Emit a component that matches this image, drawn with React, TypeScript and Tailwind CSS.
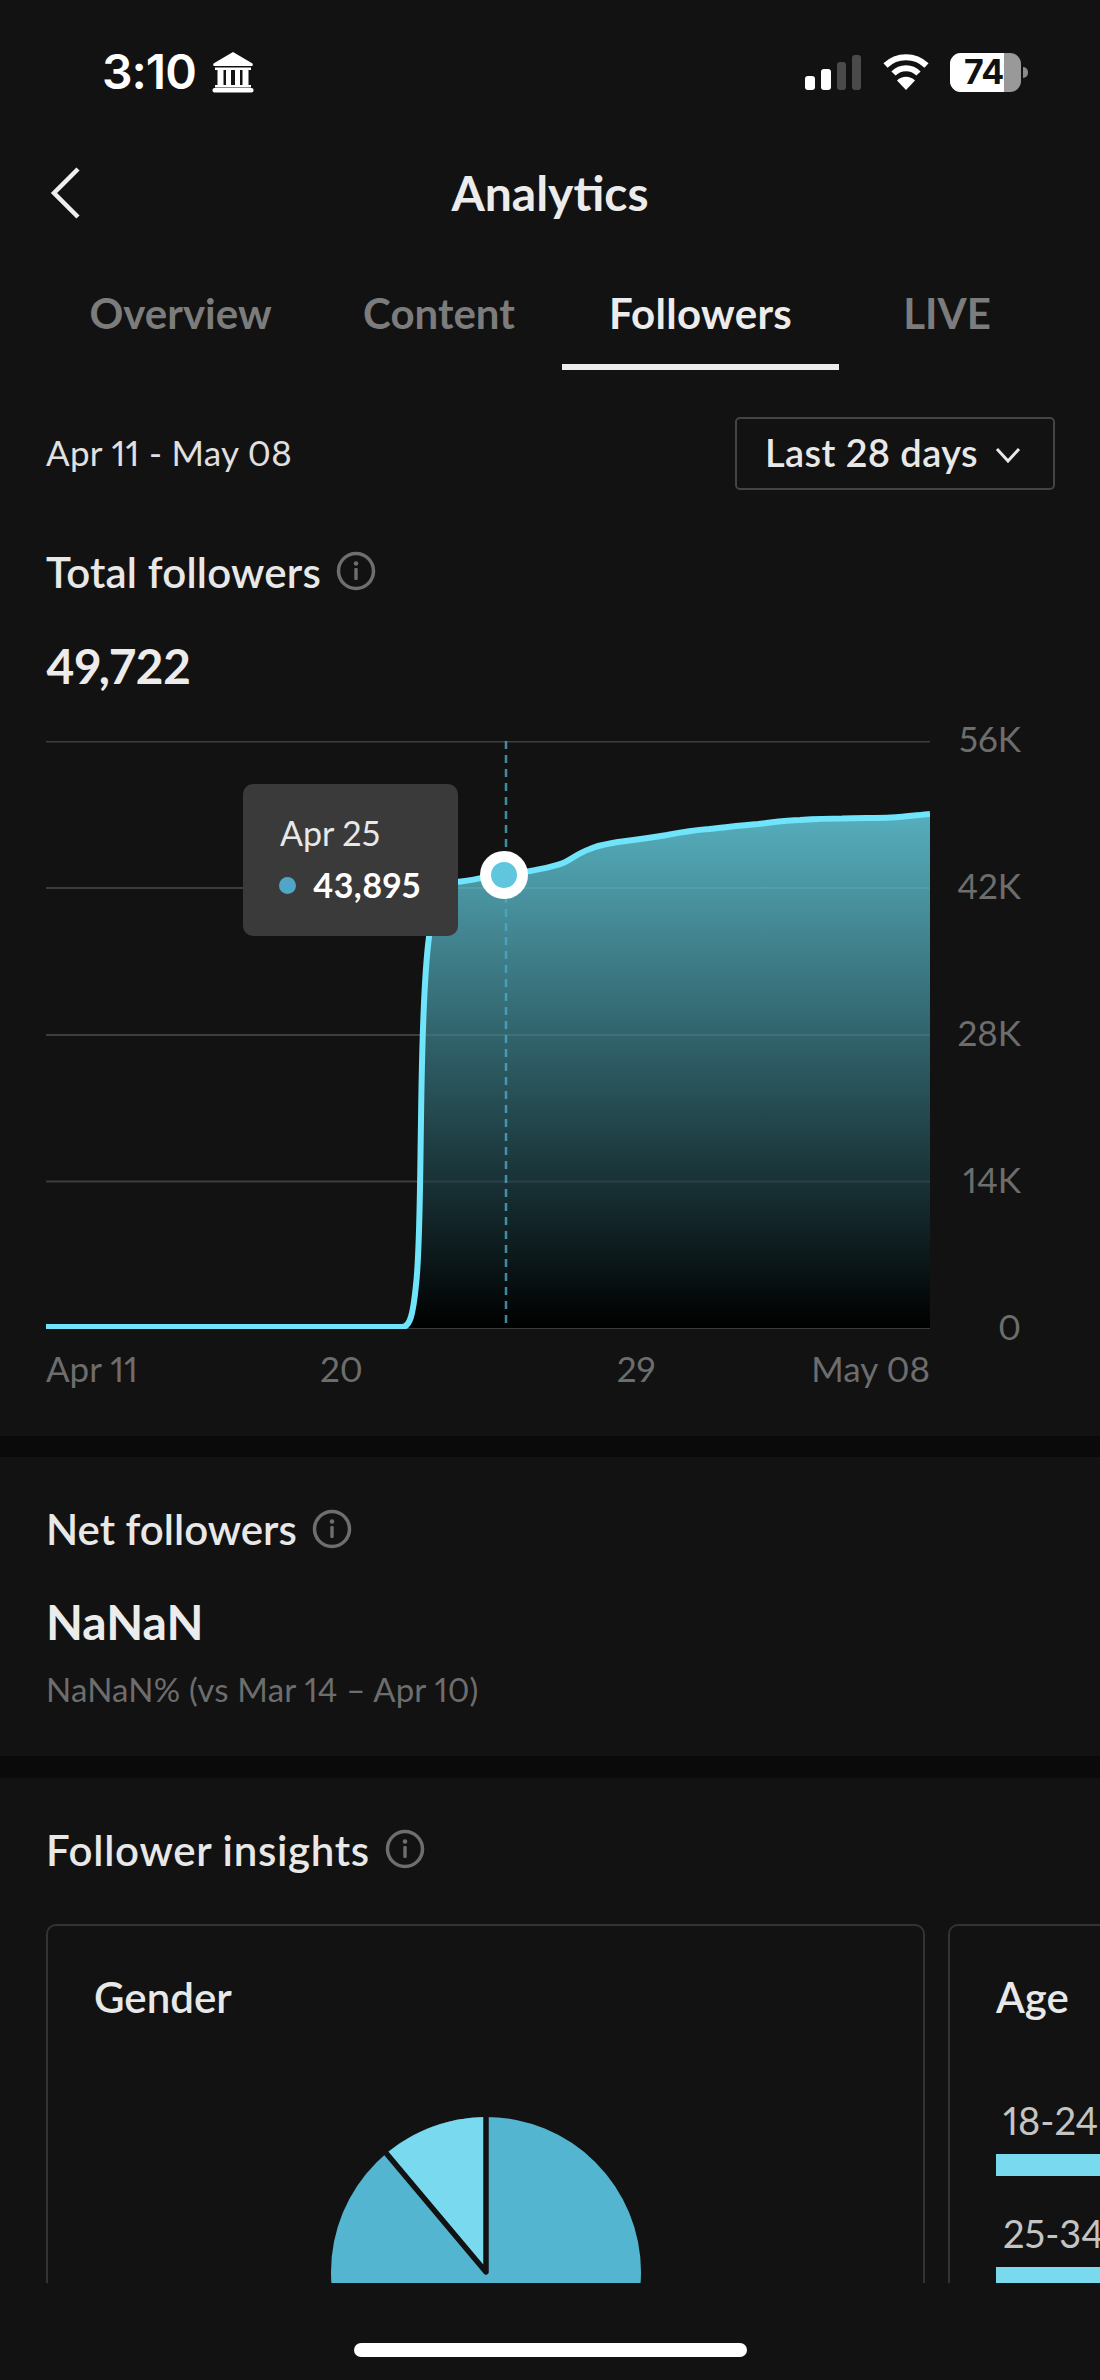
import React from "react";

function InfoIcon({ className }: { className?: string }) {
  return (
    <svg viewBox="0 0 40 40" className={className} fill="none">
      <circle cx="20" cy="20" r="17.5" stroke="#6e6e6e" strokeWidth="3.5" />
      <circle cx="20" cy="12.5" r="2.3" fill="#6e6e6e" />
      <rect x="18.3" y="17" width="3.4" height="12" rx="1" fill="#6e6e6e" />
    </svg>
  );
}

function BankIcon() {
  return (
    <svg width="42" height="42" viewBox="0 0 42 42" fill="white" className="ml-[16px]">
      <path d="M21 1 L40.5 12.5 Q41.5 14.5 40 15 L2 15 Q0.5 14.5 1.5 12.5 Z" />
      <rect x="3" y="16.5" width="36" height="2.5" />
      <rect x="5.5" y="19" width="6" height="15.5" />
      <rect x="14" y="19" width="5" height="15.5" />
      <rect x="23" y="19" width="5" height="15.5" />
      <rect x="30.5" y="19" width="6" height="15.5" />
      <rect x="3" y="34" width="36" height="2.5" />
      <rect x="0.5" y="37" width="41" height="4.5" rx="2" />
    </svg>
  );
}

function Signal() {
  return (
    <div className="flex items-end gap-[6px] h-[35px]">
      <div className="w-[10px] h-[14px] rounded-[3px] bg-white" />
      <div className="w-[10px] h-[21px] rounded-[3px] bg-white" />
      <div className="w-[9px] h-[28px] rounded-[3px] bg-[#4a4a4a]" />
      <div className="w-[9px] h-[35px] rounded-[3px] bg-[#4a4a4a]" />
    </div>
  );
}

function Wifi() {
  return (
    <svg width="46" height="36" viewBox="0 0 46 36" fill="none" className="ml-[22px]">
      <path d="M2.5 11.5 C14 0.5 32 0.5 43.5 11.5" stroke="white" strokeWidth="6" strokeLinecap="butt" />
      <path d="M10.5 19.5 C17.5 12.5 28.5 12.5 35.5 19.5" stroke="white" strokeWidth="6" />
      <path d="M23 36 L14 26.5 C19 21.5 27 21.5 32 26.5 Z" fill="white" />
    </svg>
  );
}

function Battery() {
  return (
    <div className="flex items-center ml-[21px]">
      <div className="relative w-[71px] h-[39px] rounded-[11px] bg-[#999999] overflow-hidden">
        <div className="h-full w-[54px] bg-white" />
        <div className="absolute inset-0 pl-[14px] flex items-center text-[34px] font-bold text-[#111] leading-none tracking-[-0.5px]" style={{ fontFamily: "Inter, sans-serif" }}>
          74
        </div>
      </div>
      <div className="ml-[2px] w-[5px] h-[11px] rounded-r-full bg-[#8a8a8a]" />
    </div>
  );
}

function Chart() {
  const line =
    "M46 1327 L402 1327 C410 1327 413 1315 416 1285 C420 1250 420 1180 421 1120 C422 1040 424 975 429 937 C432 905 440 885 456 882 C468 881 476 879 486 877 C500 875 515 873 530 871 C545 868 553 867 563 863 C572 859 578 853 590 849 C598 845 608 844 618 842 C635 840 650 838 667 835 C682 832 695 830 709 829 C728 827 743 825 758 824 C775 822 788 820 800 820 C815 819 830 818.5 842 818.5 C860 818 880 818 891 817.5 C905 817 918 815 930 814";
  return (
    <div className="relative w-[884px] h-[588px]">
      <svg viewBox="46 741 884 588" className="block w-full h-full" width="884" height="588">
        <defs>
          <linearGradient id="fill" x1="0" y1="815" x2="0" y2="1328" gradientUnits="userSpaceOnUse">
            <stop offset="0" stopColor="#56aebd" />
            <stop offset="1" stopColor="#000000" />
          </linearGradient>
        </defs>
        {[741.5, 888, 1035, 1181.5, 1328].map((y) => (
          <line key={y} x1="46" x2="930" y1={y} y2={y} stroke="#3d3d3d" strokeWidth="2" />
        ))}
        <path d={line + " L930 1328 L405 1328 Z"} fill="url(#fill)" />
        {[888, 1035, 1181.5].map((y) => (
          <line key={y} x1="421" x2="930" y1={y} y2={y} stroke="#ffffff" strokeOpacity="0.08" strokeWidth="2" />
        ))}
        <line x1="506" x2="506" y1="741" y2="1328" stroke="#4fa8c8" strokeOpacity="0.8" strokeWidth="2.5" strokeDasharray="8 6" />
        <path d={line} fill="none" stroke="#6fe4fa" strokeWidth="6" />
        <circle cx="504" cy="875" r="24" fill="#ffffff" />
        <circle cx="504" cy="875" r="13" fill="#5fc6de" />
      </svg>
      <div className="absolute left-[197px] top-[43px] w-[215px] h-[152px] rounded-[10px] bg-[#3a3a3a] pl-[37px] pt-[29px]">
        <div className="text-[34px] leading-[40px] text-[#e8e8e8]">Apr 25</div>
        <div className="mt-[12px] flex items-center">
          <span className="w-[17px] h-[17px] rounded-full bg-[#4fa6c9] -ml-[1px]" />
          <span className="ml-[17px] text-[34px] leading-[40px] font-bold text-white tracking-[0.4px]">43,895</span>
        </div>
      </div>
    </div>
  );
}

export default function App() {
  return (
    <div className="w-[1100px] h-[2380px] bg-[#121212] flex flex-col overflow-hidden text-[#e8e8e8] proportional-nums" style={{ fontFamily: "Lato, sans-serif" }}>
      <div className="flex-1 min-h-0 overflow-hidden">
        <div className="h-[144px] flex items-center pl-[102px] pr-[72px]">
          <span className="text-[48px] leading-none font-semibold text-white tracking-[-1px]" style={{ fontFamily: "Inter, sans-serif" }}>3:10</span>
          <BankIcon />
          <div className="ml-auto flex items-center">
            <Signal />
            <Wifi />
            <Battery />
          </div>
        </div>

        <div className="relative h-[98px] flex items-center justify-center">
          <svg width="32" height="54" viewBox="0 0 32 54" fill="none" className="absolute left-[49px] top-[22px]">
            <path d="M29 3 L5 27 L29 51" stroke="#efefef" strokeWidth="4.5" />
          </svg>
          <h1 className="text-[48px] leading-[56px] font-bold text-[#ececec]">Analytics</h1>
        </div>

        <div className="h-[128px] flex pl-[45px]">
          <div className="w-[271px] pt-[50px] text-center text-[42px] leading-[42px] font-bold text-[#7c7c7c]">Overview</div>
          <div className="w-[246px] pt-[50px] text-center text-[42px] leading-[42px] font-bold text-[#7c7c7c]">Content</div>
          <div className="w-[277px] pt-[50px] text-center text-[42px] leading-[42px] font-bold text-[#ececec] border-b-[6px] border-[#ececec] tracking-[0.3px]">Followers</div>
          <div className="w-[216px] pt-[50px] text-center text-[42px] leading-[42px] font-bold text-[#7c7c7c]">LIVE</div>
        </div>

        <div className="mt-[47px] pl-[46px] pr-[45px] flex items-center justify-between">
          <span className="text-[35px] leading-[44px] text-[#e0e0e0] -mt-[4px] tracking-[0.3px]">Apr 11 - May 08</span>
          <div className="w-[320px] h-[73px] border-[2.5px] border-[#444444] rounded-[5px] flex items-center pl-[28px]">
            <span className="text-[38px] leading-[44px] font-semibold text-[#e8e8e8] -mt-[3px] tracking-[0.4px]">Last 28 days</span>
            <svg width="26" height="16" viewBox="0 0 26 16" fill="none" className="ml-[17px] mt-[2px]">
              <path d="M2 2 L13 14 L24 2" stroke="#e8e8e8" strokeWidth="3" />
            </svg>
          </div>
        </div>

        <div className="mt-[58px] px-[46px] flex items-center">
          <span className="text-[42px] leading-[48px] font-semibold tracking-[0.2px]">Total followers</span>
          <InfoIcon className="ml-[15px] w-[40px] h-[40px] -mt-[2px]" />
        </div>
        <div className="mt-[42px] px-[46px] text-[48px] leading-[56px] font-bold text-[#ececec]">49,722</div>

        <div className="mt-[47px] pl-[46px] flex">
          <Chart />
          <div className="w-[91px] -mt-[23px] -mb-[17px] flex flex-col justify-between items-end text-[35px] leading-[40px] text-[#6d6d6d]">
            <span>56K</span>
            <span>42K</span>
            <span>28K</span>
            <span>14K</span>
            <span>0</span>
          </div>
        </div>
        <div className="mt-[19px] mb-[48px] pl-[46px] w-[930px] flex text-[35px] leading-[40px] text-[#6d6d6d]">
          <span>Apr 11</span>
          <span className="ml-[182px]">20</span>
          <span className="ml-[254px]">29</span>
          <span className="ml-auto">May 08</span>
        </div>

        <div className="h-[21px] bg-[#0a0a0a]" />

        <div className="h-[299px] px-[46px] pt-[48px]">
          <div className="flex items-center">
            <span className="text-[42px] leading-[48px] font-semibold">Net followers</span>
            <InfoIcon className="ml-[15px] w-[40px] h-[40px]" />
          </div>
          <div className="mt-[41px] text-[48px] leading-[56px] font-bold text-[#ececec]">NaNaN</div>
          <div className="mt-[19px] text-[33px] leading-[40px] text-[#6d6d6d] tracking-[0.2px]">NaNaN% (vs Mar 14 – Apr 10)</div>
        </div>

        <div className="h-[22px] bg-[#0a0a0a]" />

        <div className="pt-[48px] px-[46px] flex items-center">
          <span className="text-[42px] leading-[48px] font-semibold tracking-[0.7px]">Follower insights</span>
          <InfoIcon className="ml-[15px] w-[40px] h-[40px] -mt-[3px]" />
        </div>

        <div className="mt-[50px] pl-[46px] flex w-max">
          <div className="w-[879px] h-[700px] border-2 border-[#333333] rounded-[10px] pl-[46px] pt-[49px]">
            <div className="text-[42px] leading-[44px] font-semibold">Gender</div>
            <svg width="320" height="320" viewBox="325 2112 320 320" className="mt-[93px] ml-[232px] block">
              <circle cx="485" cy="2272" r="155" fill="#54b5d0" />
              <path d="M485 2117 L485 2272 L385 2154 A155 155 0 0 1 485 2117 Z" fill="#78d9ef" />
              <path d="M385 2153 L485 2272 L485 2115" fill="none" stroke="#121212" strokeWidth="5.5" strokeLinejoin="round" />
            </svg>
          </div>
          <div className="ml-[23px] w-[879px] h-[700px] border-2 border-[#333333] rounded-[10px] pl-[46px] pt-[49px]">
            <div className="text-[42px] leading-[44px] font-semibold">Age</div>
            <div className="mt-[81px] pl-[7px] text-[38px] leading-[40px] text-[#c4c4c4]">18-24</div>
            <div className="mt-[14px] h-[22px] w-[500px] bg-[#78d9ef]" />
            <div className="mt-[37px] pl-[7px] text-[38px] leading-[40px] text-[#c4c4c4]">25-34</div>
            <div className="mt-[14px] h-[22px] w-[500px] bg-[#78d9ef]" />
          </div>
        </div>
      </div>

      <div className="h-[97px] pt-[60px] flex justify-center shrink-0">
        <div className="w-[393px] h-[14px] rounded-full bg-white" />
      </div>
    </div>
  );
}
